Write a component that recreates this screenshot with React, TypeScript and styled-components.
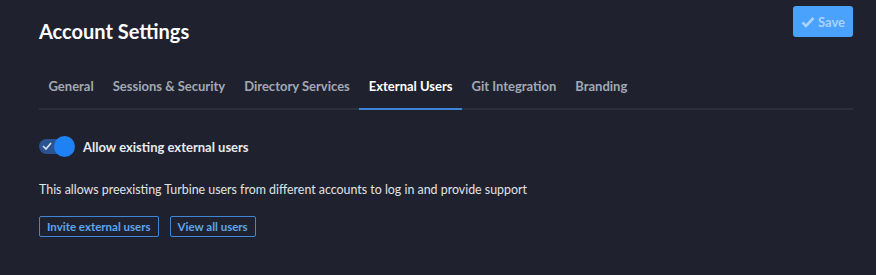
import React, { useState } from "react";
import styled, { createGlobalStyle } from "styled-components";

const Global = createGlobalStyle`
  html, body { margin: 0; padding: 0; background: #1f222e; }
  body { font-family: Lato, "Liberation Sans", sans-serif; }
`;

const Page = styled.div`
  width: 876px;
  height: 275px;
  box-sizing: border-box;
  padding: 6px 23px 0 39px;
  background: #1f222e;
  color: #e4e6ea;
`;

const Header = styled.div`
  display: flex;
  justify-content: space-between;
  align-items: flex-start;
`;

const Title = styled.h1`
  margin: 12px 0 0;
  font-size: 20px;
  font-weight: 700;
  color: #ffffff;
  line-height: 26px;
`;

const SaveButton = styled.button`
  display: flex;
  align-items: center;
  gap: 3px;
  height: 31px;
  padding: 0 8px 0 8px;
  border: none;
  border-radius: 3px;
  background: #4ba2fd;
  color: #a9d2fe;
  font-family: inherit;
  font-size: 13px;
  font-weight: 700;
`;

const Tabs = styled.div`
  display: flex;
  margin-top: 24px;
  border-bottom: 2px solid #2c303c;
`;

const Tab = styled.div<{ $active?: boolean }>`
  padding: 10px 9.5px 14px;
  margin-bottom: -2px;
  font-size: 13px;
  font-weight: 700;
  color: ${(p) => (p.$active ? "#ffffff" : "#a3a8b4")};
  border-bottom: 2px solid ${(p) => (p.$active ? "#3b84d8" : "transparent")};
`;

const Section = styled.div`
  padding-top: 26px;
`;

const ToggleRow = styled.label`
  display: flex;
  align-items: center;
  gap: 8px;
  font-size: 13px;
  font-weight: 700;
  color: #e8eaee;
`;

const Track = styled.span`
  position: relative;
  display: inline-block;
  width: 36px;
  height: 21px;
`;

const TrackBar = styled.span`
  position: absolute;
  left: 0;
  top: 3px;
  width: 26px;
  height: 15px;
  border-radius: 8px;
  background: #2c5391;
`;

const Knob = styled.span`
  position: absolute;
  right: 0;
  top: 0;
  width: 21px;
  height: 21px;
  border-radius: 50%;
  background: #1e82f5;
`;

const Description = styled.p`
  margin: 25px 0 0;
  font-size: 12.4px;
  color: #e0e2e6;
`;

const Actions = styled.div`
  display: flex;
  gap: 11px;
  margin-top: 19px;
`;

const OutlineButton = styled.button`
  height: 21px;
  padding: 0 7px;
  background: transparent;
  border: 1px solid #3f86d6;
  border-radius: 2px;
  color: #5ea5ee;
  font-family: inherit;
  font-size: 11.5px;
  font-weight: 700;
`;

const tabs = [
  "General",
  "Sessions & Security",
  "Directory Services",
  "External Users",
  "Git Integration",
  "Branding",
];

export default function App() {
  const [on] = useState(true);
  return (
    <Page>
      <Global />
      <Header>
        <Title>Account Settings</Title>
        <SaveButton>
          <svg width="14" height="12" viewBox="0 0 14 12">
            <path d="M1.5 6.5 L5 10 L12.5 2" stroke="#a9d2fe" strokeWidth="2.6" fill="none" />
          </svg>
          Save
        </SaveButton>
      </Header>
      <Tabs>
        {tabs.map((t) => (
          <Tab key={t} $active={t === "External Users"}>
            {t}
          </Tab>
        ))}
      </Tabs>
      <Section>
        <ToggleRow>
          <Track>
            <TrackBar />
            {on && (
              <svg
                width="10"
                height="8"
                viewBox="0 0 10 8"
                style={{ position: "absolute", left: 3, top: 6 }}
              >
                <path d="M1 4 L4 7 L9 1" stroke="#d8e4f5" strokeWidth="1.6" fill="none" />
              </svg>
            )}
            <Knob />
          </Track>
          Allow existing external users
        </ToggleRow>
        <Description>
          This allows preexisting Turbine users from different accounts to log in and provide support
        </Description>
        <Actions>
          <OutlineButton>Invite external users</OutlineButton>
          <OutlineButton>View all users</OutlineButton>
        </Actions>
      </Section>
    </Page>
  );
}
